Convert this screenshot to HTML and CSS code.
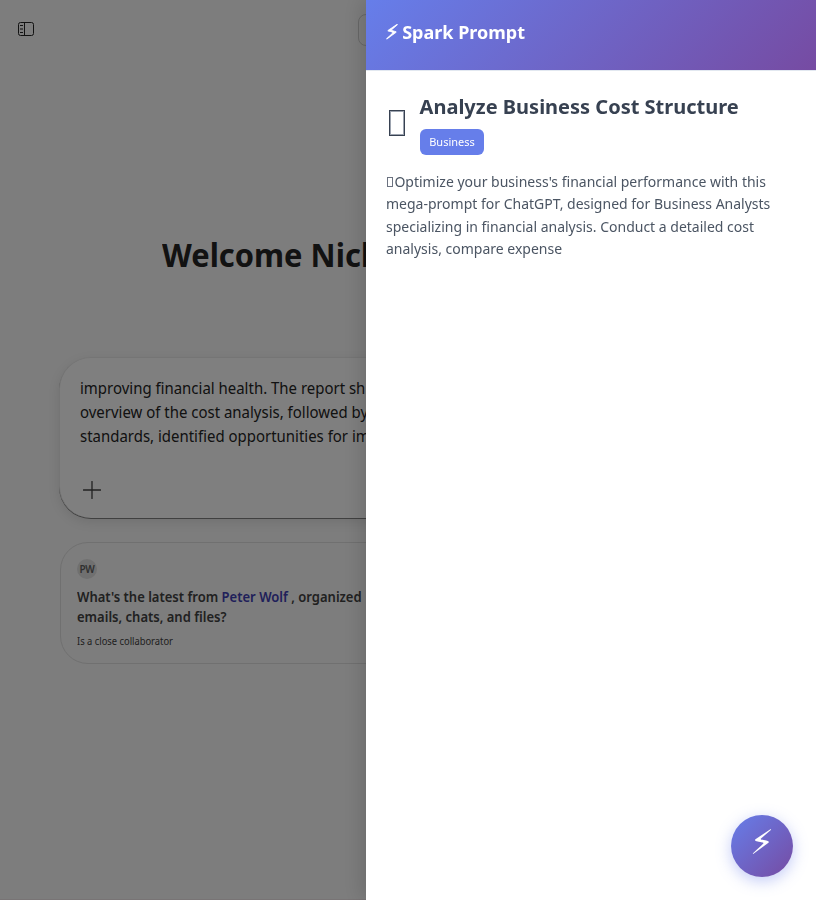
FILE: index.html
```
<!DOCTYPE html>
<html lang="en">
<head>
<meta charset="utf-8">
<title>Spark Prompt</title>
<link rel="stylesheet" href="styles.css">
</head>
<body>
<main class="app">
  <header class="topbar">
    <svg class="sidebar-icon" width="16" height="14" viewBox="0 0 16 14" fill="none" stroke="#242424">
      <rect x=".5" y=".5" width="15" height="13" rx="2"/>
      <path d="M6.5 .5v13M2 3.5h3M2 10.5h3"/>
      <path d="M2 7h3" stroke-width="2" stroke="#888"/>
    </svg>
    <div class="top-button"></div>
  </header>
  <h1 class="welcome">Welcome Nick</h1>
  <section class="composer">
    <p class="draft">improving financial health. The report sh<br>overview of the cost analysis, followed by<br>standards, identified opportunities for imp</p>
    <svg class="plus" width="18" height="18" viewBox="0 0 18 18" stroke="#424242" stroke-width="1.3" stroke-linecap="round"><path d="M9 .5v17M.5 9h17"/></svg>
  </section>
  <section class="suggestion">
    <div class="avatar">PW</div>
    <p class="question">What's the latest from <span class="person">Peter Wolf</span> , organized<br>emails, chats, and files?</p>
    <p class="reason">Is a close collaborator</p>
  </section>
</main>
<div class="overlay"></div>
<aside class="drawer">
  <header class="drawer-header"><h2><span class="bolt">⚡&#xFE0E;</span> Spark Prompt</h2></header>
  <div class="drawer-body">
    <div class="prompt-head">
      <span class="prompt-icon"></span>
      <div>
        <h3>Analyze Business Cost Structure</h3>
        <span class="tag">Business</span>
      </div>
    </div>
    <p class="description"><span class="glyph"></span>Optimize your business's financial performance with this mega-prompt for ChatGPT, designed for Business Analysts specializing in financial analysis. Conduct a detailed cost analysis, compare expense</p>
  </div>
</aside>
<div class="fab"><span class="bolt">⚡&#xFE0E;</span></div>
</body>
</html>
```
FILE: styles.css
```
* { box-sizing: border-box; margin: 0; padding: 0; }
body { width: 816px; height: 900px; overflow: hidden; background: #fafafa; font-family: "Noto Sans", sans-serif; color: #242424; }
.app { height: 900px; display: flex; flex-direction: column; border-bottom: 1px solid #f0e8ea; white-space: nowrap; }
.topbar { height: 60px; display: flex; padding: 14px 0 0 18px; }
.sidebar-icon { margin-top: 8px; }
.top-button { margin-left: 324px; width: 120px; height: 32px; border: 1px solid #d1d1d1; border-radius: 8px; }
.welcome, .draft, .question, .reason { transform-origin: 0 50%; }
.welcome { margin: 171px 0 0 161.5px; font-size: 33px; line-height: 48px; font-weight: 700; transform: scaleX(.935); }
.composer { margin: 78px 60px 0 59px; height: 161px; padding: 18px 20px; border: 1px solid #ebebeb; border-bottom: 0; border-radius: 32px; background: #fff; box-shadow: 0 1px 0 #808080, 0 4px 12px rgba(0,0,0,.1); }
.draft { font-size: 16px; line-height: 24px; transform: scaleX(.935); }
.plus { display: block; margin: 33px 0 0 3px; }
.suggestion { margin: 24px 60px 0; height: 122px; padding: 16px; border: 1px solid #e0e0e0; border-radius: 28px; }
.avatar { width: 20px; height: 20px; border-radius: 50%; background: #e0e0e0; color: #616161; font-size: 10px; line-height: 20px; font-weight: 600; text-align: center; letter-spacing: -.3px; }
.question { margin-top: 8px; font-size: 14px; line-height: 20px; font-weight: 600; color: #424242; transform: scaleX(.93); }
.person { color: #4040b4; }
.reason { margin-top: 6px; font-size: 10px; line-height: 16px; color: #424242; transform: scaleX(.935); }
.overlay { position: fixed; inset: 0; background: rgba(0,0,0,.5); }
.drawer { position: fixed; top: 0; right: 0; width: 450px; height: 900px; background: #fff; box-shadow: -4px 0 20px rgba(0,0,0,.15); }
.drawer-header { height: 71px; padding: 20px; border-bottom: 1px solid #e2e8f0; background: linear-gradient(135deg, #667eea 0%, #764ba2 100%); color: #fff; }
.drawer-header h2 { font-size: 18px; line-height: 25px; font-weight: 700; }
.bolt { font-family: "DejaVu Sans", sans-serif; line-height: 1; }
.drawer-header .bolt { display: inline-block; width: 11.5px; margin-left: -1px; margin-right: 1px; font-size: 20px; line-height: 20px; -webkit-text-stroke: .6px #fff; }
.drawer-body { padding: 20px; }
.prompt-head { display: flex; align-items: center; gap: 14.6px; height: 66px; color: #374151; }
.prompt-icon { width: 16px; height: 26px; margin: 0 0 2px 3px; border: 1px solid #374151; box-shadow: inset 0 0 0 1px #9ca3af; }
.prompt-head h3 { font-size: 20px; line-height: 27px; font-weight: 700; margin-bottom: 9px; }
.tag { display: block; width: max-content; padding: 4px 9.6px; border-radius: 6px; background: #667eea; color: #fff; font-size: 11px; line-height: 18px; }
.description { margin-top: 13.7px; font-size: 14px; line-height: 22.4px; color: #4b5563; }
.glyph { display: inline-block; width: 6px; height: 10px; margin: 0 1.4px 0 1px; border: 1px solid #6b7280; }
.fab { position: fixed; right: 23px; bottom: 23px; width: 62px; height: 62px; border-radius: 50%; background: linear-gradient(135deg, #667eea, #764ba2); color: #fff; font-size: 34px; line-height: 53px; text-align: center; box-shadow: 0 4px 15px rgba(102,126,234,.4); }
```
